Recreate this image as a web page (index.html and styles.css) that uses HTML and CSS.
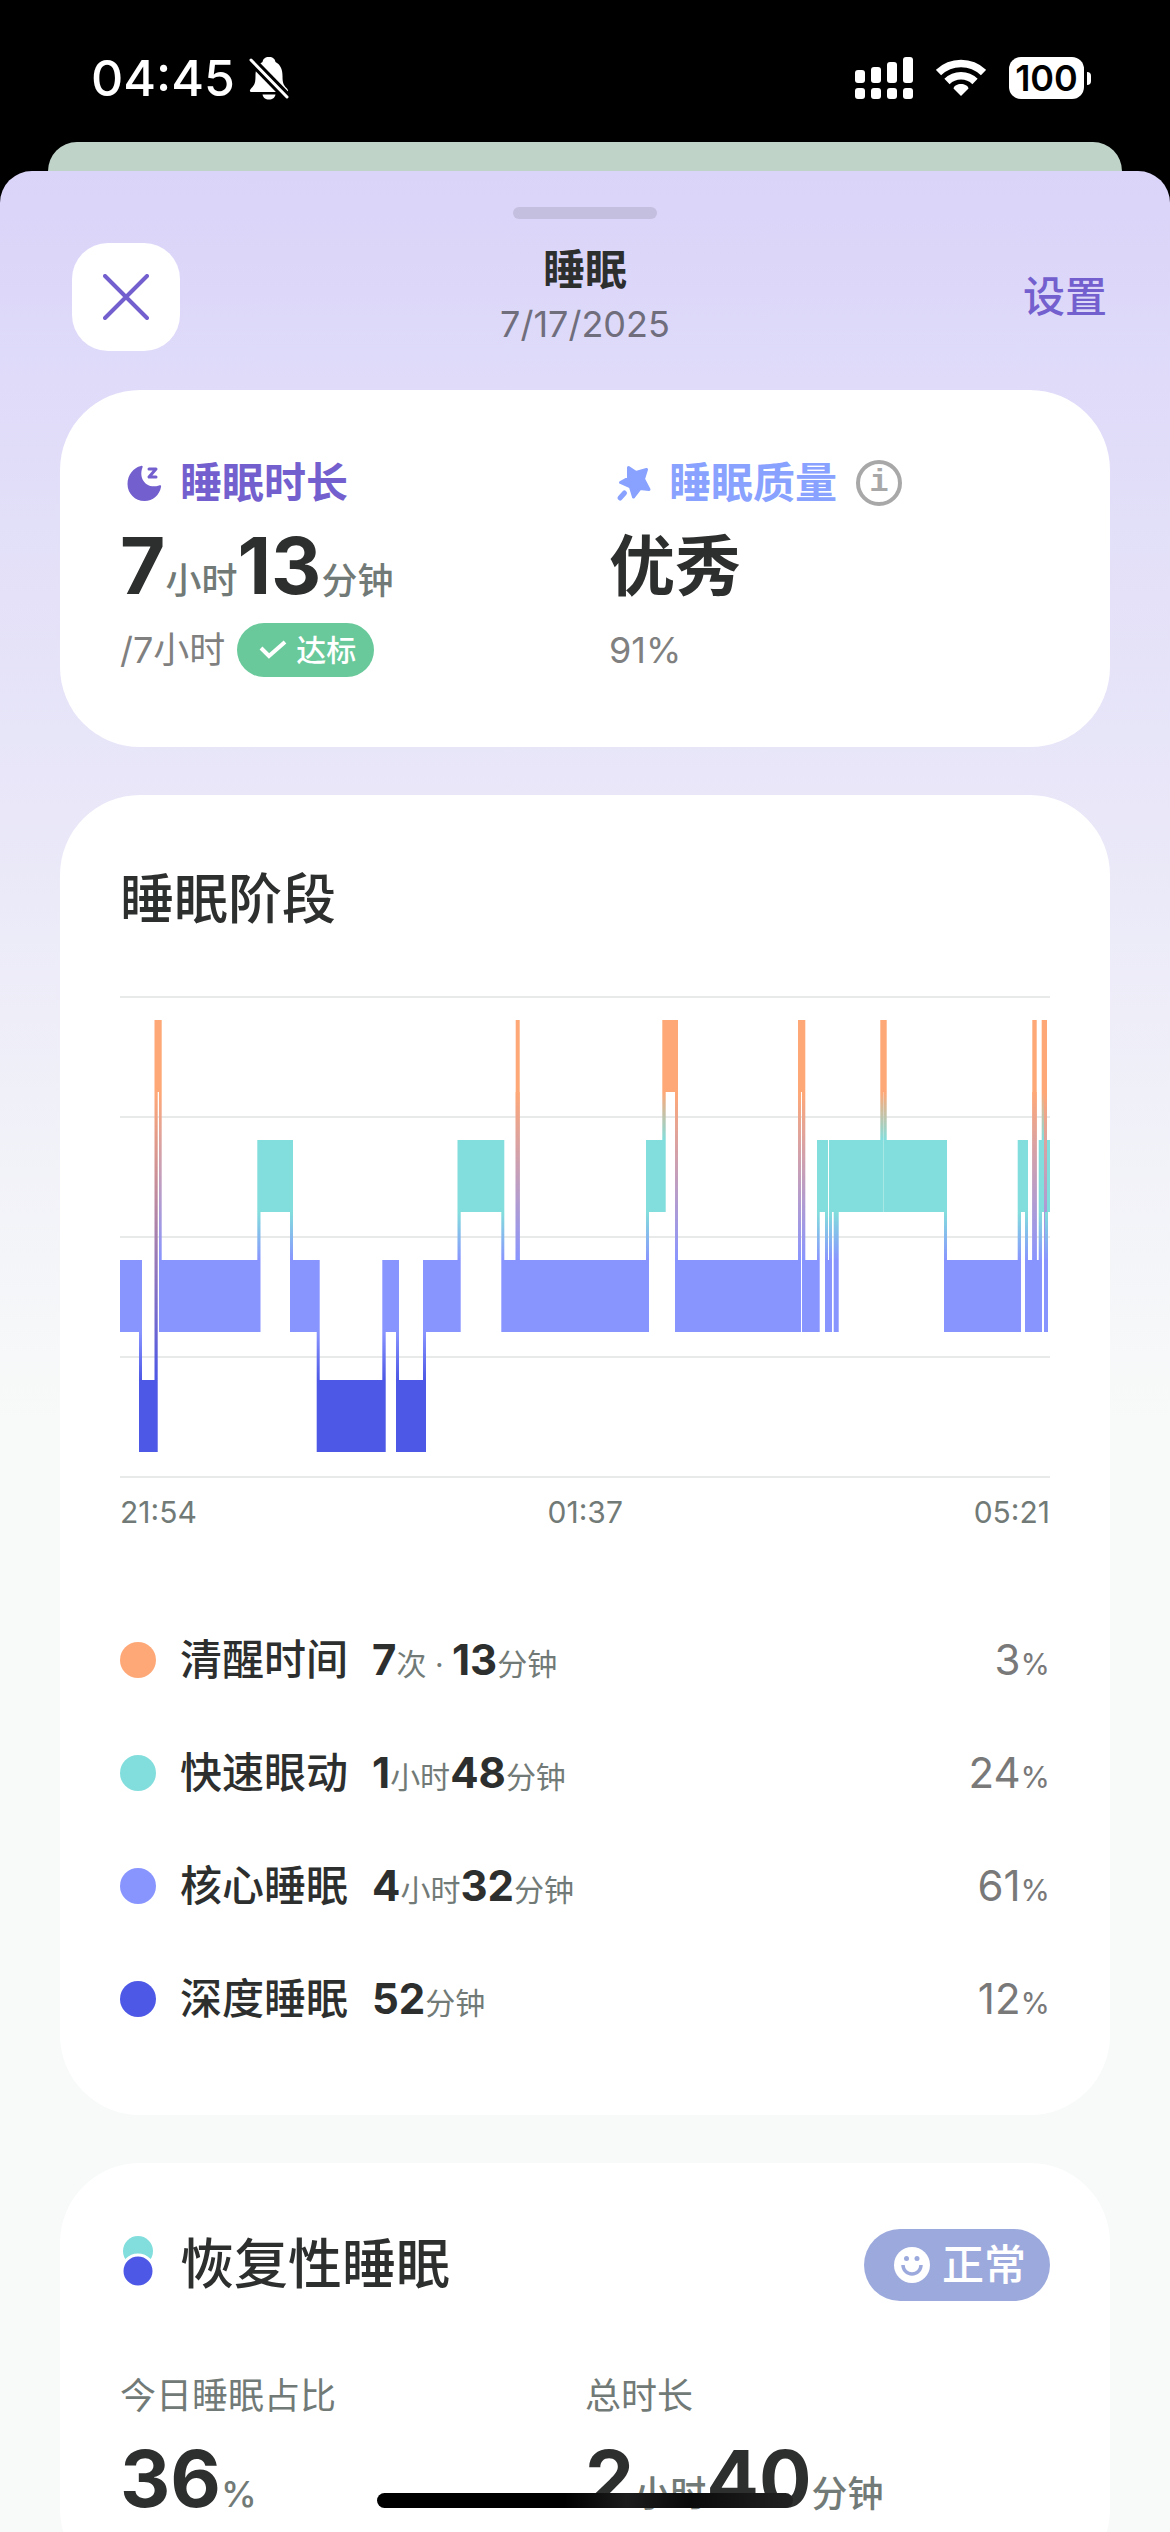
FILE: index.html
```html
<!DOCTYPE html>
<html lang="zh-CN">
<head>
    <meta charset="UTF-8">
    <meta name="viewport" content="width=device-width, initial-scale=1.0">
    <title>睡眠</title>
    <link rel="stylesheet" href="styles.css">
</head>
<body>
    <div class="screen">
        <div class="statusBar">
            <span class="clock">04:45</span>
            <svg class="bell" width="40" height="44" viewBox="0 0 40 44">
                <path fill="#fff" d="M20 1c-4 0-6 2-6.500 5C8 9 6.500 14 6.500 20c0 7-1 9-4 12C1 33.500 0 35.500 2 36h36c2-.5 1-2.500-.5-4-3-3-4-5-4-12 0-6-1.500-11-7-14-.5-3-2.500-5-6.500-5zM13.500 38.500h13c-.5 3-3 5-6.500 5s-6-2-6.500-5z"/>
                <path stroke="#000" stroke-width="9" d="M0 2l40 41"/>
                <path stroke="#fff" stroke-width="3" stroke-linecap="round" d="M2 4l36 37"/>
            </svg>
            <div class="statusIcons">
                <svg width="58" height="42" viewBox="0 0 58 42" fill="#fff">
                    <rect x="0" y="13" width="10" height="13" rx="3"/>
                    <rect x="16" y="10" width="10" height="16" rx="3"/>
                    <rect x="32" y="5" width="10" height="21" rx="3"/>
                    <rect x="48" y="0" width="10" height="26" rx="3"/>
                    <rect x="0" y="31" width="10" height="11" rx="3"/>
                    <rect x="16" y="31" width="10" height="11" rx="3"/>
                    <rect x="32" y="31" width="10" height="11" rx="3"/>
                    <rect x="48" y="31" width="10" height="11" rx="3"/>
                </svg>
                <svg width="50" height="38" viewBox="0 0 50 38" fill="none" stroke="#fff">
                    <path stroke-width="7.500" d="M2.500 13.500a32.500 32.500 0 0 1 45 0"/>
                    <path stroke-width="7.500" d="M11 22.500a20 20 0 0 1 28 0"/>
                    <path fill="#fff" stroke="none" d="M25 37l-7.500-7.500c1-6 14-6 15 0z"/>
                </svg>
                <div class="battery"><span class="batteryLevel">100</span><span class="batteryCap"></span></div>
            </div>
        </div>
        <div class="backSheet"></div>
        <main class="sheet">
            <div class="handle"></div>
            <header class="sheetHeader">
                <button class="btnClose" aria-label="关闭">
                    <svg width="46" height="46" viewBox="0 0 46 46" stroke="#745fce" stroke-width="4" stroke-linecap="round">
                        <path d="M2 2l42 42M44 2L2 44"/>
                    </svg>
                </button>
                <div class="heading">
                    <h1>睡眠</h1>
                    <p>7/17/2025</p>
                </div>
                <button class="btnSettings">设置</button>
            </header>

            <section class="card summary">
                <div>
                    <h2 class="duration">
                        <svg width="48" height="48" viewBox="0 0 48 48" fill="#745fce">
                            <path d="M21 7c1.500-.5 2 .5 1.500 1.500C18 20 27 30.500 39 26.500c1.500-.5 2.500 0 2 1.500C39.500 36 33 42 24.500 42 15 42 7.500 34.500 7.500 25 7.500 16 13.500 8.500 21 7z"/>
                            <path fill="none" stroke="#745fce" stroke-width="3" stroke-linecap="round" stroke-linejoin="round" d="M29 10h7l-7 8h7"/>
                        </svg>
                        睡眠时长
                    </h2>
                    <p class="big">7<span>小时</span>13<span>分钟</span></p>
                    <p class="note">/7小时
                        <span class="badge reached">
                            <svg width="28" height="20" viewBox="0 0 28 20" fill="none" stroke="#fff" stroke-width="4">
                                <path d="M2 8l8 8L26 2"/>
                            </svg>
                            达标
                        </span>
                    </p>
                </div>
                <div>
                    <h2 class="quality">
                        <svg width="48" height="48" viewBox="0 0 48 48" fill="#89a1ff" stroke="#89a1ff" stroke-linejoin="round" stroke-linecap="round">
                            <path stroke-width="3" d="M19.500 8.500L27 13.500 37.500 10.500 34.500 20 40 30.500 31 29.500 24.500 38 21.500 28 11.500 23.500 19.500 19z"/>
                            <path stroke-width="5" d="M11 39l4.500-5"/>
                        </svg>
                        睡眠质量
                        <button class="btnInfo" aria-label="说明">i</button>
                    </h2>
                    <p class="big grade">优秀</p>
                    <p class="note">91%</p>
                </div>
            </section>

            <section class="card stages">
                <h2>睡眠阶段</h2>
                <svg class="chart" id="chart" viewBox="0 0 930 482" preserveAspectRatio="none">
                    <defs>
                        <linearGradient id="awake-rem" gradientUnits="userSpaceOnUse" x1="0" y1="96" x2="0" y2="144"><stop stop-color="#ffa877"/><stop offset="1" stop-color="#82dedc"/></linearGradient>
                        <linearGradient id="awake-core" gradientUnits="userSpaceOnUse" x1="0" y1="96" x2="0" y2="264"><stop stop-color="#ffa877"/><stop offset="1" stop-color="#8995ff"/></linearGradient>
                        <linearGradient id="awake-deep" gradientUnits="userSpaceOnUse" x1="0" y1="96" x2="0" y2="384"><stop stop-color="#ffa877"/><stop offset="1" stop-color="#4d58e6"/></linearGradient>
                        <linearGradient id="rem-core" gradientUnits="userSpaceOnUse" x1="0" y1="216" x2="0" y2="264"><stop stop-color="#82dedc"/><stop offset="1" stop-color="#8995ff"/></linearGradient>
                        <linearGradient id="core-deep" gradientUnits="userSpaceOnUse" x1="0" y1="336" x2="0" y2="384"><stop stop-color="#8995ff"/><stop offset="1" stop-color="#4d58e6"/></linearGradient>
                    </defs>
                    <path stroke="#e8eae9" stroke-width="2" d="M0 1h930M0 121h930M0 241h930M0 361h930M0 481h930"/>
                </svg>
                <div class="axis"><span>21:54</span><span>01:37</span><span>05:21</span></div>
                <ul class="legend">
                    <li><i class="dot awake"></i>清醒时间<b>7<span>次 · </span>13<span>分钟</span></b><em>3<span>%</span></em></li>
                    <li><i class="dot rem"></i>快速眼动<b>1<span>小时</span>48<span>分钟</span></b><em>24<span>%</span></em></li>
                    <li><i class="dot core"></i>核心睡眠<b>4<span>小时</span>32<span>分钟</span></b><em>61<span>%</span></em></li>
                    <li><i class="dot deep"></i>深度睡眠<b>52<span>分钟</span></b><em>12<span>%</span></em></li>
                </ul>
            </section>

            <section class="card restore">
                <div class="restoreHeader">
                    <svg width="36" height="58" viewBox="0 0 36 58">
                        <circle cx="18" cy="15" r="15" fill="#82dedc"/>
                        <circle cx="18" cy="35" r="16" fill="#4d58e6" stroke="#fff" stroke-width="3"/>
                    </svg>
                    <h2>恢复性睡眠</h2>
                    <span class="badge normal">
                        <svg width="36" height="36" viewBox="0 0 36 36">
                            <circle cx="18" cy="18" r="18" fill="#fff"/>
                            <circle cx="12.500" cy="11.500" r="2.500" fill="#9ca9dd"/>
                            <circle cx="23" cy="11.500" r="2.500" fill="#9ca9dd"/>
                            <path fill="none" stroke="#9ca9dd" stroke-width="3.500" d="M9 18a9 9 0 0 0 18 0"/>
                        </svg>
                        正常
                    </span>
                </div>
                <div class="stats">
                    <div>
                        <p class="label">今日睡眠占比</p>
                        <p class="big">36<span>%</span></p>
                    </div>
                    <div>
                        <p class="label">总时长</p>
                        <p class="big">2<span>小时</span>40<span>分钟</span></p>
                    </div>
                </div>
            </section>
        </main>
        <div class="homeBar"></div>
    </div>
    <script>
        const chart = document.getElementById("chart");
        const stageNames = ["awake", "rem", "core", "deep"];
        const colors = ["#ffa877", "#82dedc", "#8995ff", "#4d58e6"];
        const barHeight = 72;

        // stage, start, end
        const stages = [
            [2, 0, 22], [3, 19, 37.7], [0, 34.5, 41.7], [2, 39, 140.5],
            [1, 137.3, 173], [2, 170, 199.7], [3, 196.7, 265.7], [2, 262.3, 279],
            [3, 276, 306], [2, 303, 340.7], [1, 337.5, 384.3], [2, 381.3, 399.7],
            [0, 395.7, 399.7], [2, 395.7, 529], [1, 526, 545.7], [0, 542.3, 558],
            [2, 555, 681], [0, 678, 685.3], [2, 682, 699.7], [1, 697, 708],
            [2, 705, 712], [1, 709, 716.7], [2, 713.7, 718.7], [1, 715.7, 763.7],
            [0, 760.3, 766.7], [1, 764, 827], [2, 824, 901], [1, 897.7, 908],
            [2, 905, 916.7], [0, 912.3, 916.7], [2, 912.3, 922], [1, 918.7, 925],
            [0, 921.7, 927], [2, 924, 928], [1, 925, 930]
        ];

        function stageTop(stage){
            return 24 + stage * 120;
        }

        function addRect(x, y, width, height, fill){
            const rect = document.createElementNS("http://www.w3.org/2000/svg", "rect");
            rect.setAttribute("x", x);
            rect.setAttribute("y", y);
            rect.setAttribute("width", width);
            rect.setAttribute("height", height);
            rect.setAttribute("fill", fill);
            chart.appendChild(rect);
        }

        for (const [stage, start, end] of stages) {
            addRect(start, stageTop(stage), end - start, barHeight, colors[stage]);
        }

        // joins between one stage and the next
        for (let i = 1; i < stages.length; i++) {
            const before = stages[i - 1];
            const after = stages[i];
            const upper = Math.min(before[0], after[0]);
            const lower = Math.max(before[0], after[0]);
            const y = stageTop(upper) + barHeight;
            addRect(after[1], y, before[2] - after[1], stageTop(lower) - y, `url(#${stageNames[upper]}-${stageNames[lower]})`);
        }
    </script>
</body>
</html>
```

FILE: styles.css
```css
*
{
    box-sizing: border-box;
}
body
{
    margin: 0px;
    background-color: #000;
    color: #2d2f2e;
    font-family: Inter, "Noto Sans CJK SC", sans-serif;
    font-size: 42px;
}
h1, h2, p, ul
{
    margin: 0px;
    padding: 0px;
    font-weight: 500;
}
button
{
    padding: 0px;
    border: 0px;
    background: none;
    font: inherit;
    cursor: pointer;
}
svg
{
    display: block;
    flex-shrink: 0;
}
.screen
{
    height: 100vh;
    display: flex;
    flex-direction: column;
    overflow: hidden;
}
.statusBar
{
    height: 142px;
    padding: 14px 79px 0px 91px;
    flex-shrink: 0;
    display: flex;
    align-items: center;
    color: #fff;
}
.clock
{
    font-size: 50px;
    font-weight: 500;
}
.bell
{
    margin-left: 14px;
}
.statusIcons
{
    margin-left: auto;
    display: flex;
    align-items: center;
    gap: 23px;
}
.battery
{
    display: flex;
    align-items: center;
    gap: 3px;
}
.batteryLevel
{
    width: 75px;
    border-radius: 12px;
    background-color: #fff;
    color: #000;
    font-size: 36px;
    font-weight: 600;
    line-height: 42px;
    text-align: center;
}
.batteryCap
{
    width: 4px;
    height: 13px;
    border-radius: 0px 6px 6px 0px;
    background-color: #fff;
}
.backSheet
{
    height: 29px;
    margin: 0px 48px;
    flex-shrink: 0;
    border-radius: 29px 29px 0px 0px;
    background-color: #bfd3c9;
}
.sheet
{
    flex: 1 0 auto;
    padding: 36px 60px 0px;
    border-radius: 32px 32px 0px 0px;
    background: linear-gradient(#dad4f9 0px, #dfdbf9 210px, #e8e6f8 600px, #f8faf9 1250px);
}
.handle
{
    width: 144px;
    height: 12px;
    margin: 0px auto 24px;
    border-radius: 6px;
    background-color: #c4bfdf;
}
.sheetHeader
{
    margin-bottom: 39px;
    padding: 0px 3px;
    display: grid;
    grid-template-columns: 1fr auto 1fr;
    align-items: center;
}
.btnClose
{
    width: 108px;
    height: 108px;
    margin-left: 9px;
    display: flex;
    align-items: center;
    justify-content: center;
    border-radius: 36px;
    background-color: #fff;
}
.heading
{
    line-height: 54px;
    text-align: center;
}
.heading h1
{
    font-size: 42px;
    font-weight: 700;
}
.heading p
{
    color: #706d7c;
    font-size: 36px;
    font-weight: 400;
}
.btnSettings
{
    justify-self: end;
    color: #745fce;
    font-weight: 500;
    line-height: 54px;
}
.card
{
    margin-bottom: 48px;
    padding: 60px;
    border-radius: 80px;
    background-color: #fff;
}
.summary
{
    padding-bottom: 63px;
    display: grid;
    grid-template-columns: 1fr 1fr;
    column-gap: 48px;
}
.summary h2
{
    display: flex;
    align-items: center;
    gap: 12px;
    font-size: 42px;
    font-weight: 600;
    line-height: 66px;
}
.duration
{
    color: #745fce;
}
.quality
{
    color: #89a1ff;
}
.btnInfo
{
    width: 46px;
    height: 46px;
    margin-left: 7px;
    border: 4px solid #a8a8a8;
    border-radius: 50%;
    color: #a8a8a8;
    font: bold 32px/36px "Liberation Mono", monospace;
}
.big
{
    font-size: 78px;
    font-weight: 700;
    line-height: 100px;
}
.big span
{
    color: #717a76;
    font-size: 36px;
    font-weight: 500;
    line-height: 1;
}
.grade
{
    font-size: 66px;
}
.note
{
    display: flex;
    align-items: center;
    gap: 12px;
    color: #808080;
    font-size: 36px;
    font-weight: 400;
    line-height: 68px;
}
.badge
{
    display: flex;
    align-items: center;
    color: #fff;
    font-weight: 500;
}
.reached
{
    height: 54px;
    padding: 0px 18px 0px 22px;
    gap: 9px;
    border-radius: 27px;
    background-color: #69c99b;
    font-size: 30px;
}
.stages h2, .restore h2
{
    font-size: 54px;
    line-height: 90px;
}
.chart
{
    width: 100%;
    height: 482px;
    margin-top: 51px;
}
.axis
{
    margin-top: 12px;
    display: flex;
    justify-content: space-between;
    color: #717a76;
    font-size: 30px;
    line-height: 44px;
}
.legend
{
    margin-top: 69px;
    line-height: 54px;
    list-style: none;
}
.legend li
{
    height: 113px;
    display: flex;
    align-items: center;
    gap: 24px;
}
.legend span
{
    color: #717a76;
    font-size: 30px;
    font-weight: 400;
    line-height: 1;
}
.legend b
{
    font-weight: 700;
    white-space: pre;
}
.legend em, .legend em span
{
    margin-left: auto;
    color: #797979;
    font-style: normal;
    font-weight: 400;
}
.dot
{
    width: 36px;
    height: 36px;
    border-radius: 50%;
}
.awake
{
    background-color: #ffa877;
}
.rem
{
    background-color: #82dedc;
}
.core
{
    background-color: #8995ff;
}
.deep
{
    background-color: #4d58e6;
}
.restoreHeader
{
    height: 84px;
    display: flex;
    align-items: center;
    gap: 24px;
}
.normal
{
    height: 72px;
    margin-left: auto;
    padding: 0px 24px 0px 30px;
    gap: 12px;
    border-radius: 36px;
    background-color: #9ca9dd;
    line-height: 54px;
}
.stats
{
    margin-top: 62px;
    display: grid;
    grid-template-columns: 1fr 1fr;
}
.label
{
    margin-bottom: 6px;
    color: #717a76;
    font-size: 36px;
    font-weight: 400;
    line-height: 54px;
}
.homeBar
{
    position: fixed;
    bottom: 24px;
    left: 50%;
    width: 416px;
    height: 15px;
    margin-left: -208px;
    border-radius: 8px;
    background: linear-gradient(90deg, #000 45%, #1c1c1c 60%, #0a0a0a 75%, #222);
}
```
